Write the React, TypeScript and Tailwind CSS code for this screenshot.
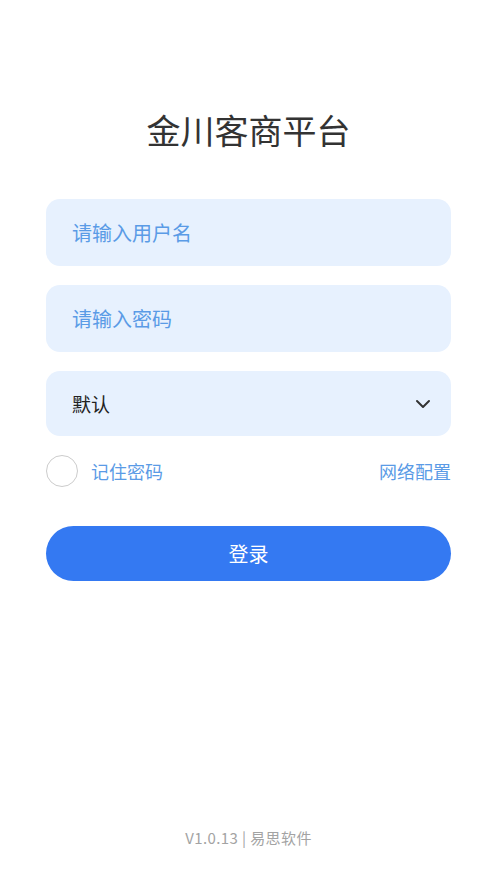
import React from "react";

export default function App() {
  return (
    <div
      className="min-h-screen w-full bg-white flex flex-col"
      style={{ fontFamily: '"Noto Sans CJK SC", "Noto Sans", sans-serif' }}
    >
      <div className="px-[46px] flex flex-col">
        <h1 className="mt-[110px] h-[40px] leading-[40px] text-center text-[34px] font-normal text-[#333333]">
          金川客商平台
        </h1>
        <div className="mt-[49px] h-[67px] rounded-[14px] bg-[#e7f1fe] flex items-center pl-[26px]">
          <span className="text-[20px] leading-none text-[#5a9be6]">请输入用户名</span>
        </div>
        <div className="mt-[19px] h-[67px] rounded-[14px] bg-[#e7f1fe] flex items-center pl-[26px]">
          <span className="text-[20px] leading-none text-[#5a9be6]">请输入密码</span>
        </div>
        <div className="mt-[19px] h-[65px] rounded-[14px] bg-[#e7f1fe] flex items-center justify-between pl-[26px] pr-[20px]">
          <span className="text-[19px] leading-none text-[#222222]">默认</span>
          <svg width="16" height="10" viewBox="0 0 16 10" fill="none">
            <path d="M2 2 L8 8 L14 2" stroke="#333" strokeWidth="2" strokeLinecap="round" strokeLinejoin="round" />
          </svg>
        </div>
        <div className="mt-[19px] h-[32px] flex items-center justify-between">
          <div className="flex items-center">
            <div className="w-[32px] h-[32px] rounded-full border border-[#cccccc] bg-white" />
            <span className="ml-[13px] text-[18px] leading-none text-[#5a9be6]">记住密码</span>
          </div>
          <span className="text-[18px] leading-none text-[#5a9be6]">网络配置</span>
        </div>
        <div className="mt-[39px] h-[55px] rounded-full bg-[#3479f2] flex items-center justify-center">
          <span className="text-[20px] leading-none text-white">登录</span>
        </div>
      </div>
      <div className="mt-auto pb-[35px] h-[55px] flex items-center justify-center">
        <span className="text-[15px] leading-[20px] tracking-[0.4px] text-[#a3a3a3]">V1.0.13 | 易思软件</span>
      </div>
    </div>
  );
}
